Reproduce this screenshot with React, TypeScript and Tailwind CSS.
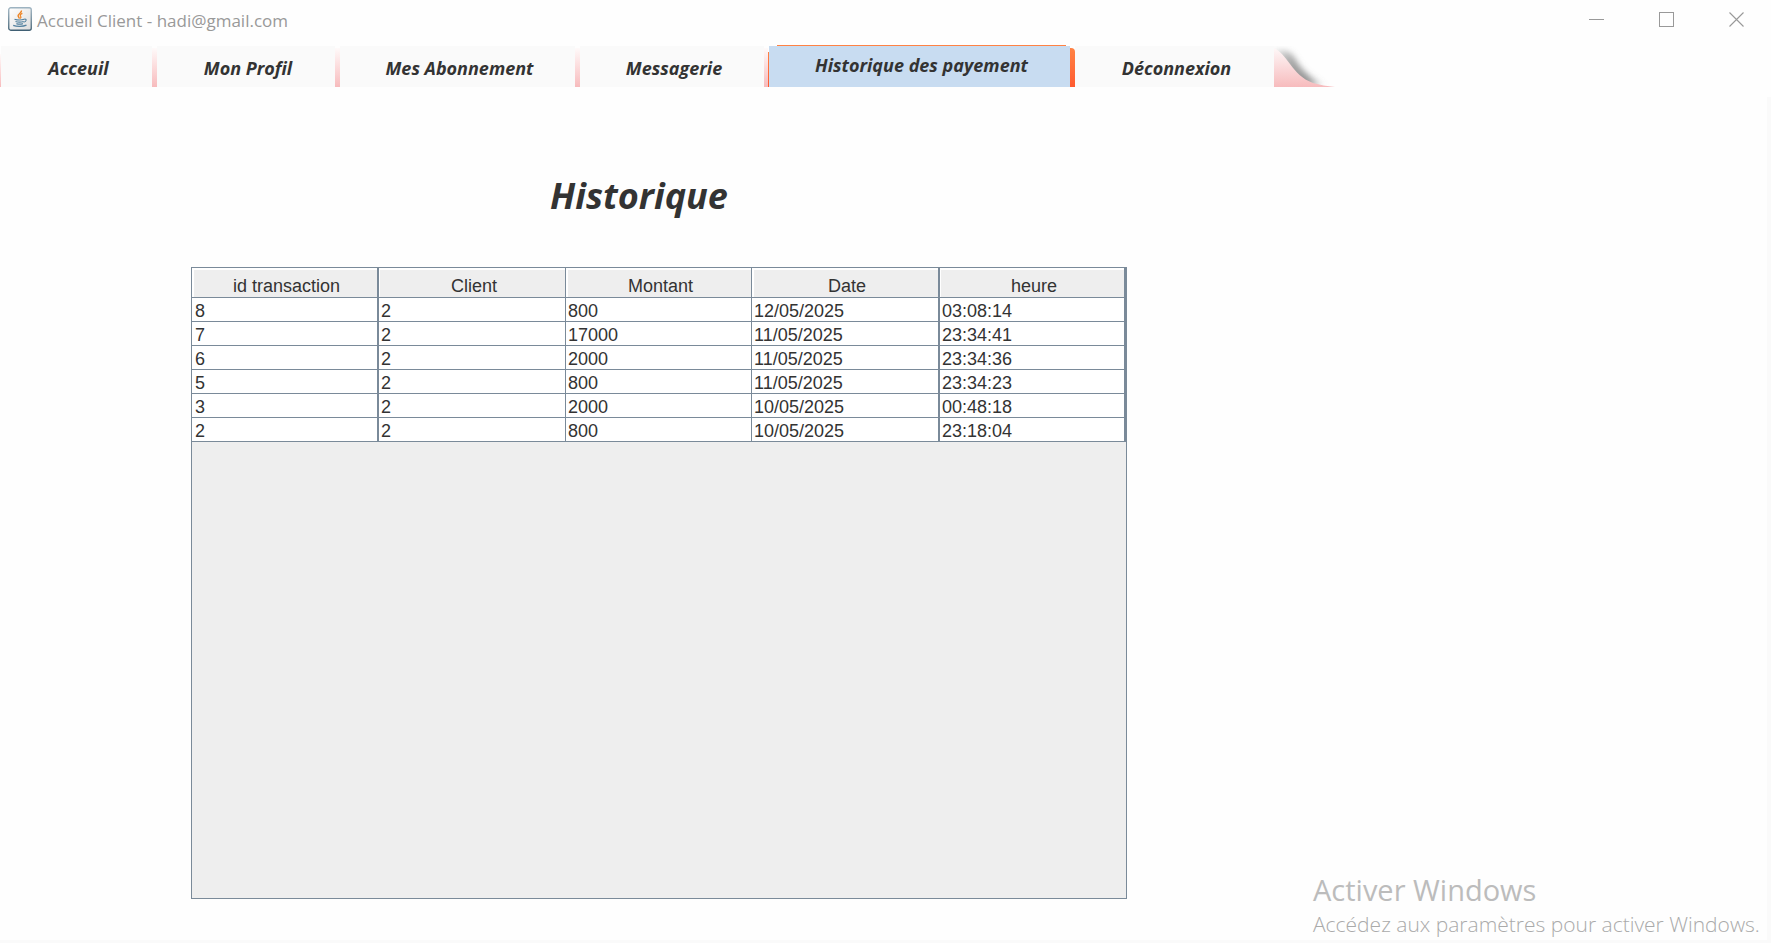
const tabs = [
  { label: 'Acceuil', width: 'w-[151px]' },
  { label: 'Mon Profil', width: 'w-[178px]' },
  { label: 'Mes Abonnement', width: 'w-[235px]' },
  { label: 'Messagerie', width: 'w-[184px]' },
  { label: 'Historique des payement', width: 'w-[301px]', active: true },
  { label: 'Déconnexion', width: 'w-[199px]' },
];

const columns = [
  { label: 'id transaction', col: 'w-[187px]', line: 'border-r-2', edge: 'shadow-[inset_2px_2px_0_#fff]' },
  { label: 'Client', col: 'w-[187px]', line: 'border-r', edge: 'shadow-[inset_1px_2px_0_#fff]' },
  { label: 'Montant', col: 'w-[186px]', line: 'border-r', edge: 'shadow-[inset_2px_2px_0_#fff]' },
  { label: 'Date', col: 'w-[188px]', line: 'border-r-2', edge: 'shadow-[inset_2px_2px_0_#fff]' },
  { label: 'heure', col: 'w-[186px]', line: 'border-r-2', edge: 'shadow-[inset_1px_2px_0_#fff]' },
];

const rows = [
  ['8', '2', '800', '12/05/2025', '03:08:14'],
  ['7', '2', '17000', '11/05/2025', '23:34:41'],
  ['6', '2', '2000', '11/05/2025', '23:34:36'],
  ['5', '2', '800', '11/05/2025', '23:34:23'],
  ['3', '2', '2000', '10/05/2025', '00:48:18'],
  ['2', '2', '800', '10/05/2025', '23:18:04'],
];

function JavaIcon() {
  return (
    <svg width="24" height="24" viewBox="0 0 24 24" aria-hidden="true">
      <defs>
        <linearGradient id="java-face" x1="0" y1="0" x2="1" y2="1">
          <stop offset="0" stopColor="#ffffff" />
          <stop offset="1" stopColor="#dcdcdc" />
        </linearGradient>
        <linearGradient id="java-rim" x1="0" y1="0" x2="0" y2="1">
          <stop offset="0" stopColor="#9db3c1" />
          <stop offset="1" stopColor="#3f5f73" />
        </linearGradient>
      </defs>
      <rect x="0.75" y="0.75" width="22.5" height="22.5" rx="2" fill="url(#java-face)" stroke="url(#java-rim)" strokeWidth="1.3" />
      <path d="M13.4 3.6c.8 2.2-3.8 3.4-3.3 5.3.2.9 1.2 1.5 1.1 2.7" fill="none" stroke="#ee8424" strokeWidth="1.5" />
      <path d="M14.4 6.4c-2.3 1-2.6 1.9-1.7 3 .6.8.2 1.5-.5 2.1" fill="none" stroke="#ee8424" strokeWidth="1.2" />
      <path d="M6.5 12.2c2.8.9 7.4.8 9.7.1M7.5 14.5c2.2.8 5.8.8 8.2 0M8.4 16.6c1.9.7 4.6.7 6.5 0" fill="none" stroke="#53819f" strokeWidth="1.2" />
      <path d="M16.2 12.2c2.6-.6 2.8 2.3-.6 3.1" fill="none" stroke="#53819f" strokeWidth="1.1" />
      <path d="M5.2 18.3c3.3 1.4 9.8 1.4 13.3-.1" fill="none" stroke="#53819f" strokeWidth="1.3" />
    </svg>
  );
}

function TitleBar() {
  const control = 'flex h-9 w-[70px] items-center justify-center';
  return (
    <header className="flex h-[46px] items-start justify-between">
      <div className="flex items-start gap-[5px] pt-[7px] pl-2">
        <JavaIcon />
        <span className="text-[17px] leading-[27px] text-[#999]">Accueil Client - hadi@gmail.com</span>
      </div>
      <div className="flex pt-px">
        <button type="button" aria-label="Réduire" className={control}>
          <svg width="15" height="15"><path d="M0 7.5H15" stroke="#999" /></svg>
        </button>
        <button type="button" aria-label="Agrandir" className={control}>
          <svg width="15" height="15"><rect x=".5" y=".5" width="14" height="14" fill="none" stroke="#999" /></svg>
        </button>
        <button type="button" aria-label="Fermer" className={control}>
          <svg width="15" height="15"><path d="M.5.5l14 14M14.5.5l-14 14" stroke="#999" strokeWidth="1.1" /></svg>
        </button>
      </div>
    </header>
  );
}

function Divider({ before, after }: { before?: boolean; after?: boolean }) {
  if (after) {
    return <span className="mt-[2px] w-[5px] shrink-0 rounded-tr-[4px] bg-linear-to-b from-[#ff8244] to-[#ff5a30]" />;
  }
  return (
    <span className="flex w-[5px] shrink-0 pt-[2px]">
      <span className="flex-1 bg-linear-to-b from-[#fefafa] to-[#f7bbbd]" />
      {before && <span className="mt-1 w-px bg-linear-to-b from-[#ff8244] to-[#ff5a30]" />}
    </span>
  );
}

function TabTail() {
  const curve = 'M0 2C6 5 11 11 16 18C22 26 28 33 39 37C46 39 53 40 61 41H0Z';
  return (
    <svg width="61" height="41" viewBox="0 0 61 41" className="shrink-0" aria-hidden="true">
      <defs>
        <linearGradient id="tail-fill" x1="0" y1="0" x2="0" y2="1">
          <stop offset="0" stopColor="#fef8f8" />
          <stop offset="1" stopColor="#f7bbbd" />
        </linearGradient>
        <linearGradient id="tail-fade" gradientUnits="userSpaceOnUse" x1="0" y1="0" x2="61" y2="0">
          <stop offset="0" stopColor="#777" stopOpacity=".1" />
          <stop offset=".3" stopColor="#777" stopOpacity=".7" />
          <stop offset=".55" stopColor="#777" stopOpacity=".8" />
          <stop offset=".9" stopColor="#777" stopOpacity="0" />
        </linearGradient>
        <filter id="tail-blur" x="-30%" y="-30%" width="160%" height="160%">
          <feGaussianBlur stdDeviation="3.4" />
        </filter>
      </defs>
      <path d="M-2 4C10 3 17 6 21 13C26 22 34 31 50 39L30 41L8 22Z" fill="url(#tail-fade)" filter="url(#tail-blur)" />
      <path d={curve} fill="url(#tail-fill)" />
    </svg>
  );
}

function TabBar() {
  return (
    <nav className="flex h-[41px]">
      <span className="mt-2 w-px bg-linear-to-b from-[#fefafa] to-[#f7bbbd]" />
      {tabs.map((tab, i) => (
        <div key={tab.label} className="flex">
          <a
            href="#"
            aria-current={tab.active ? 'page' : undefined}
            className={`relative flex shrink-0 justify-center pl-1 text-[18px] leading-6 font-bold whitespace-nowrap text-[#333] italic ${tab.width} ${
              tab.active ? 'bg-[#c8dcf1] pt-[7px]' : 'bg-[#fafafa] pt-[10px]'
            }`}
          >
            {tab.active && <span className="absolute -top-px right-1 left-2 h-px bg-[#ff8244]" />}
            {tab.label}
          </a>
          {i < tabs.length - 1 && <Divider before={tabs[i + 1].active} after={tab.active} />}
        </div>
      ))}
      <TabTail />
    </nav>
  );
}

function HistoryTable() {
  return (
    <div className="min-h-[632px] w-[936px] max-w-full border border-[#7a8a99] bg-[#eee] font-['Liberation_Sans',Arial,sans-serif]">
      <table className="w-full table-fixed border-separate border-spacing-0 text-[18px] leading-[20px] text-[#333]">
        <colgroup>
          {columns.map((c) => (
            <col key={c.label} className={c.col} />
          ))}
        </colgroup>
        <thead>
          <tr>
            {columns.map((c) => (
              <th key={c.label} scope="col" className={`h-[30px] border-b border-[#7a8a99] bg-[#eee] pt-2 pb-px pl-1 font-normal ${c.line} ${c.edge}`}>
                {c.label}
              </th>
            ))}
          </tr>
        </thead>
        <tbody>
          {rows.map((row) => (
            <tr key={row[0]}>
              {row.map((value, i) => (
                <td key={columns[i].label} className={`h-6 border-b border-[#7a8a99] bg-white p-0 pt-[3px] first:pl-[3px] pl-[2px] ${columns[i].line}`}>
                  {value}
                </td>
              ))}
            </tr>
          ))}
        </tbody>
      </table>
    </div>
  );
}

export default function App() {
  return (
    <div className="relative flex min-h-screen flex-col overflow-hidden bg-[#fefefe] font-['Open_Sans','Noto_Sans',sans-serif]">
      <TitleBar />
      <TabBar />
      <main className="mt-[10px] flex flex-1 flex-col border-r-4 border-b-[3px] border-[#fafafa] pl-[191px]">
        <div className="w-[936px] max-w-full">
          <h1 className="mt-[75px] mb-[47px] pr-10 text-center text-[36px] leading-[48px] font-bold text-[#333] italic">Historique</h1>
          <HistoryTable />
        </div>
      </main>
      <aside className="pointer-events-none absolute right-0 bottom-1 w-[458px] whitespace-nowrap text-[#bcbcbc]">
        <p className="text-[29px] leading-[38px]">Activer Windows</p>
        <p className="text-[21px] leading-[30px] font-light text-[#aaa]">Accédez aux paramètres pour activer Windows.</p>
      </aside>
    </div>
  );
}
